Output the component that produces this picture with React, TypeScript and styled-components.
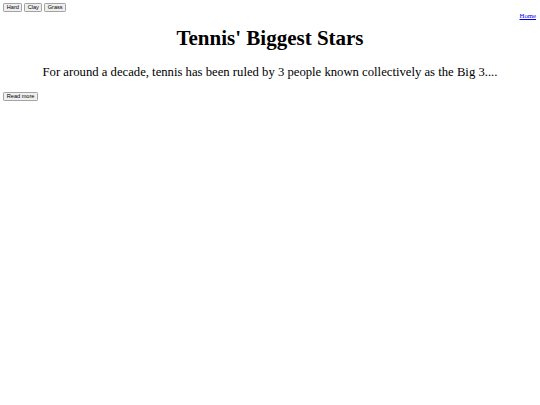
import React from "react";
import styled, { createGlobalStyle } from "styled-components";

const GlobalStyle = createGlobalStyle`
  html, body {
    margin: 0;
    padding: 0;
    background: #ffffff;
  }
  body {
    padding: 3.4px 3.4px;
    font-family: "Liberation Serif", serif;
    color: #000000;
  }
`;

const Page = styled.div`
  display: flex;
  flex-direction: column;
  font-family: "Liberation Serif", serif;
`;

const Toolbar = styled.nav`
  display: flex;
  gap: 2px;
  height: 8.5px;
`;

const SmallButton = styled.button`
  font-family: "Liberation Sans", sans-serif;
  font-size: 5.6px;
  line-height: 6.5px;
  height: 8.5px;
  padding: 0 2.4px;
  border: 0.8px solid #a3a3a3;
  border-radius: 1.2px;
  background: #efefef;
  color: #000000;
  margin: 0;
  cursor: pointer;
`;

const HomeRow = styled.div`
  display: flex;
  justify-content: flex-end;
  padding-right: 0.6px;
  height: 8px;
  line-height: 8px;
`;

const HomeLink = styled.a`
  font-family: "Liberation Serif", serif;
  font-size: 6.75px;
  line-height: 8px;
  color: #0000ee;
  text-decoration: underline;
`;

const Title = styled.h1`
  margin: 6.4px 0 0;
  text-align: center;
  font-family: "Liberation Serif", serif;
  font-size: 21px;
  font-weight: bold;
  line-height: 24px;
`;

const Lead = styled.p`
  margin: 14.5px 0 0;
  text-align: center;
  font-family: "Liberation Serif", serif;
  font-size: 12.7px;
  line-height: 15px;
`;

const ReadMoreRow = styled.div`
  display: flex;
  margin-top: 12.3px;
`;

export default function App() {
  return (
    <>
      <GlobalStyle />
      <Page>
        <Toolbar>
          <SmallButton>Hard</SmallButton>
          <SmallButton>Clay</SmallButton>
          <SmallButton>Grass</SmallButton>
        </Toolbar>
        <HomeRow>
          <HomeLink href="#">Home</HomeLink>
        </HomeRow>
        <Title>Tennis' Biggest Stars</Title>
        <Lead>
          For around a decade, tennis has been ruled by 3 people known collectively as the Big 3....
        </Lead>
        <ReadMoreRow>
          <SmallButton>Read more</SmallButton>
        </ReadMoreRow>
      </Page>
    </>
  );
}
